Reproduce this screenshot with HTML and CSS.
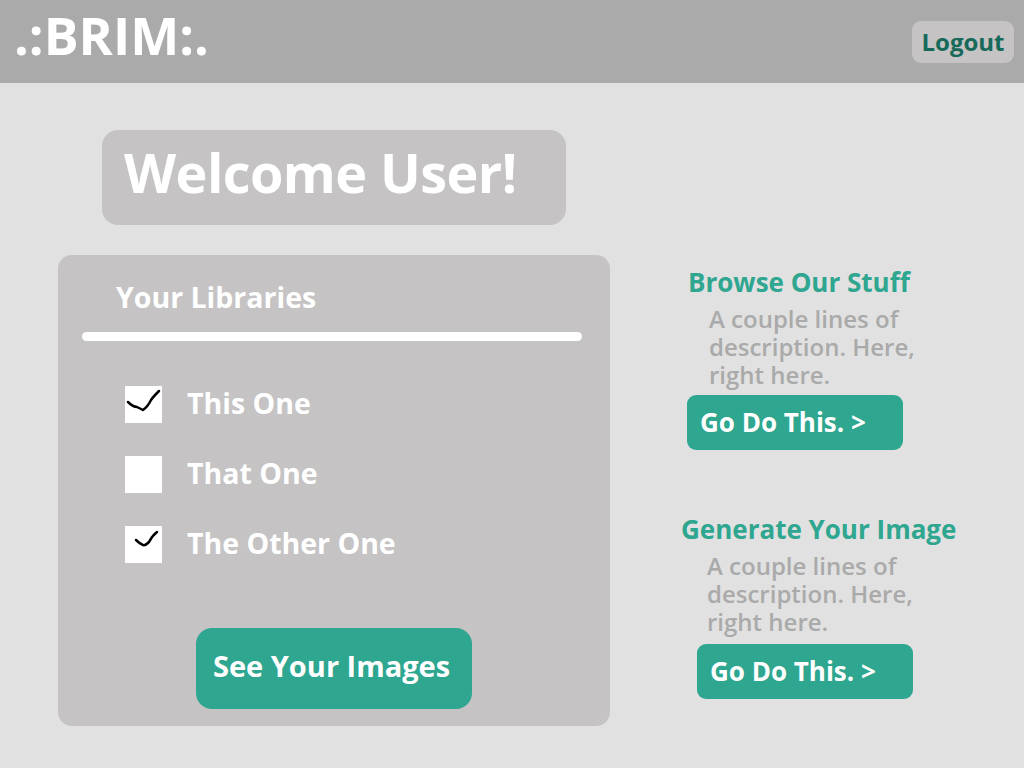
FILE: index.html
```html
<!DOCTYPE html>
<html>
<head>
<meta charset="utf-8">
<link rel="stylesheet" href="styles.css">
</head>
<body>
<header class="topbar">
  <div class="logo">.:BRIM:.</div>
  <button class="logout">Logout</button>
</header>
<main class="main">
  <section class="left">
    <div class="welcome">Welcome User!</div>
    <div class="panel">
      <h2 class="panel-title">Your Libraries</h2>
      <div class="bar"></div>
      <ul class="libs">
        <li class="lib">
          <span class="box">
            <svg viewBox="0 0 37 37" width="37" height="37"><path d="M3 16 C6 19 9 21 12 21 C14 22 16 23 18 24 C21 22 24 18 26 14 C28 11 31 8 34 5" fill="none" stroke="#000" stroke-width="2.5" stroke-linecap="round" stroke-linejoin="round"/></svg>
          </span>
          <span class="lib-label">This One</span>
        </li>
        <li class="lib">
          <span class="box"></span>
          <span class="lib-label">That One</span>
        </li>
        <li class="lib">
          <span class="box">
            <svg viewBox="0 0 37 37" width="37" height="37"><path d="M11 14 C13 16 15 18 18 19 C20 20 22 18 24 16 C26 12 28 9 32 6" fill="none" stroke="#000" stroke-width="2.5" stroke-linecap="round" stroke-linejoin="round"/></svg>
          </span>
          <span class="lib-label">The Other One</span>
        </li>
      </ul>
      <div class="panel-foot">
        <button class="btn btn-big">See Your Images</button>
      </div>
    </div>
  </section>
  <section class="right">
    <div class="card card-one">
      <h3 class="card-title">Browse Our Stuff</h3>
      <p class="card-desc">A couple lines of description. Here, right here.</p>
      <button class="btn btn-go">Go Do This. &gt;</button>
    </div>
    <div class="card card-two">
      <h3 class="card-title">Generate Your Image</h3>
      <p class="card-desc">A couple lines of description. Here, right here.</p>
      <button class="btn btn-go">Go Do This. &gt;</button>
    </div>
  </section>
</main>
</body>
</html>
```
FILE: styles.css
```css
* { box-sizing: border-box; }
html, body { margin: 0; padding: 0; }
body {
  width: 1024px;
  height: 768px;
  background: #e1e1e1;
  font-family: "Open Sans", "Noto Sans", sans-serif;
  overflow: hidden;
}
.topbar {
  height: 83px;
  background: #aaaaaa;
  display: flex;
  justify-content: space-between;
  align-items: flex-start;
  padding: 0 10px 0 14px;
}
.logo {
  color: #fff;
  font-size: 52px;
  font-weight: 700;
  line-height: 1;
  margin-top: 9px;
  letter-spacing: 0;
}
.logout {
  margin-top: 21px;
  width: 102px;
  height: 42px;
  background: #c5c3c3;
  border: none;
  border-radius: 9px;
  color: #17695a;
  font-family: inherit;
  font-weight: 700;
  font-size: 24px;
  padding: 0 0 2px;
}
.main {
  display: flex;
  padding: 47px 0 0 58px;
  gap: 71px;
}
.left {
  width: 552px;
  display: flex;
  flex-direction: column;
  gap: 30px;
}
.welcome {
  margin-left: 44px;
  width: 464px;
  height: 95px;
  background: #c5c3c4;
  border-radius: 16px;
  color: #fff;
  font-size: 54px;
  font-weight: 700;
  line-height: 85px;
  padding-left: 22px;
  letter-spacing: -0.6px;
}
.panel {
  height: 471px;
  background: #c5c3c4;
  border-radius: 14px;
  padding: 22px 28px 0 24px;
  display: flex;
  flex-direction: column;
}
.panel-title {
  margin: 0 0 0 34px;
  color: #fff;
  font-size: 28.5px;
  font-weight: 700;
  line-height: 40px;
  letter-spacing: 0;
}
.bar {
  margin-top: 15px;
  height: 9px;
  background: #fff;
  border-radius: 5px;
}
.libs {
  list-style: none;
  margin: 45px 0 0 43px;
  padding: 0;
  display: flex;
  flex-direction: column;
  gap: 33px;
}
.lib {
  display: flex;
  align-items: center;
  height: 37px;
  gap: 25px;
}
.box {
  width: 37px;
  height: 37px;
  background: #fff;
  display: block;
}
.box svg { display: block; }
.lib-label {
  color: #fff;
  font-size: 28.5px;
  font-weight: 700;
  line-height: 37px;
  margin-top: -3px;
}
.panel-foot {
  margin-top: 67px;
  display: flex;
  justify-content: center;
}
.btn {
  border: none;
  background: #2ea690;
  color: #fff;
  font-family: inherit;
  font-weight: 700;
  padding: 0;
  text-align: left;
}
.btn-big {
  width: 276px;
  height: 81px;
  border-radius: 16px;
  font-size: 29px;
  padding: 0 0 6px 17px;
  margin-left: 4px;
  margin-top: -2px;
}
.right {
  display: flex;
  flex-direction: column;
  padding-top: 137px;
}
.card-title {
  margin: 0;
  color: #2ea690;
  font-size: 26px;
  font-weight: 700;
  line-height: 30px;
}
.card-desc {
  margin: 8px 0 0;
  width: 235px;
  color: #aaaaaa;
  font-size: 24px;
  font-weight: 600;
  line-height: 28px;
}
.btn-go {
  display: block;
  width: 216px;
  height: 55px;
  border-radius: 9px;
  font-size: 26px;
  padding: 0 0 2px 13px;
}
.card-one .card-title { margin-left: 7px; }
.card-one .card-desc { margin-left: 28px; }
.card-one .btn-go { margin-top: 6px; margin-left: 6px; }
.card-two { margin-top: 64px; }
.card-two .card-desc { margin-left: 26px; }
.card-two .btn-go { margin-top: 8px; margin-left: 16px; }
```
